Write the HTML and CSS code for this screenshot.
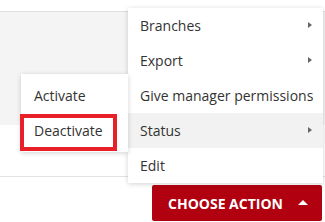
FILE: index.html
```html
<!DOCTYPE html>
<html lang="en">
<head>
  <meta charset="UTF-8">
  <meta name="viewport" content="width=device-width, initial-scale=1.0">
  <title>Choose Action</title>
  <link rel="stylesheet" href="styles.css">
</head>
<body>
  <div class="page">
    <div class="panel"></div>
    <div class="divider"></div>
    <div class="actions">
      <button class="action-btn">CHOOSE ACTION <span class="caret-up"></span></button>
    </div>

    <ul class="menu">
      <li class="has-sub">Branches</li>
      <li class="has-sub">Export</li>
      <li>Give manager permissions</li>
      <li class="has-sub active">Status</li>
      <li>Edit</li>
    </ul>

    <ul class="submenu">
      <li>Activate</li>
      <li class="marked">Deactivate</li>
    </ul>
  </div>
</body>
</html>
```

FILE: styles.css
```css
body {
  margin: 0;
  padding: 0;
  font-family: "Open Sans", sans-serif;
  background-color: #fff;
  color: #333;
}

.page {
  position: relative;
  width: 325px;
  height: 222px;
  overflow: hidden;
}

.panel {
  margin-top: 11px;
  height: 113px;
  background-color: #f4f4f4;
  border-top: 1px solid #dedede;
}

.divider {
  margin-top: 51px;
  border-top: 1px solid #e2e2e2;
}

.actions {
  display: flex;
  justify-content: flex-end;
  padding-right: 3px;
  margin-top: 8px;
}

.action-btn {
  width: 170px;
  height: 36px;
  border: none;
  border-radius: 2px;
  background-color: #b1000f;
  color: #fff;
  font-family: "Open Sans", sans-serif;
  font-weight: 700;
  font-size: 14px;
  display: flex;
  align-items: center;
  justify-content: center;
  gap: 15px;
  padding: 0 0 0 2px;
}

.caret-up {
  width: 0;
  height: 0;
  border-left: 5px solid transparent;
  border-right: 5px solid transparent;
  border-bottom: 5px solid #fff;
  margin-bottom: 2px;
}

ul {
  list-style: none;
  margin: 0;
  padding: 0;
}

.menu, .submenu {
  position: absolute;
  background-color: #fff;
  box-shadow: 0 1px 5px rgba(0,0,0,0.18);
  font-size: 14px;
}

.menu {
  left: 128px;
  top: 8px;
  width: 195px;
}

.submenu {
  left: 21px;
  top: 74px;
  width: 107px;
  padding: 4px 0;
}

.menu li, .submenu li {
  height: 35px;
  line-height: 35px;
  position: relative;
}

.menu li {
  padding-left: 12px;
}

.submenu li {
  padding-left: 13px;
}

.menu li.active {
  background-color: #f2f2f2;
}

.has-sub::after {
  content: "";
  position: absolute;
  right: 11px;
  top: 14px;
  border-top: 3.5px solid transparent;
  border-bottom: 3.5px solid transparent;
  border-left: 4px solid #666;
}

.marked::before {
  content: "";
  position: absolute;
  left: -1px;
  top: 1px;
  width: 89px;
  height: 29px;
  border: 4px solid #e8202a;
}
```
